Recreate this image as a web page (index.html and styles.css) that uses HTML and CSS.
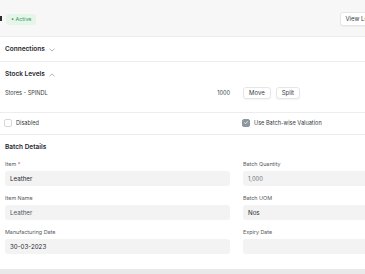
FILE: index.html
```html
<!DOCTYPE html>
<html>
<head>
<meta charset="utf-8">
<link rel="stylesheet" href="styles.css">
</head>
<body>
<div class="page">
  <header class="head">
    <span class="title-end"></span>
    <span class="badge">&bull; Active</span>
    <span class="spacer"></span>
    <button class="btn view">View Ledger</button>
  </header>

  <section class="sec conn">
    <h2 class="sec-title">Connections
      <svg class="chev" viewBox="0 0 8 5" width="6" height="4"><path d="M1 1l3 3 3-3" fill="none" stroke="#8a8f94" stroke-width="0.9" stroke-linecap="round" stroke-linejoin="round"/></svg>
    </h2>
  </section>

  <section class="sec stock">
    <h2 class="sec-title">Stock Levels
      <svg class="chev" viewBox="0 0 8 5" width="6" height="4"><path d="M1 4l3-3 3 3" fill="none" stroke="#8a8f94" stroke-width="0.9" stroke-linecap="round" stroke-linejoin="round"/></svg>
    </h2>
    <div class="cols stock-row">
      <div class="wh"><span>Stores - SPINDL</span><span>1000</span></div>
      <div class="acts"><button class="btn sm">Move</button><button class="btn sm">Split</button></div>
    </div>
  </section>

  <section class="sec checks">
    <div class="cols">
      <label class="chk"><span class="box"></span>Disabled</label>
      <label class="chk"><span class="box on"><svg viewBox="0 0 8 8" width="7" height="7"><path d="M2 4.2l1.4 1.4L6 2.8" fill="none" stroke="#fff" stroke-width="1" stroke-linecap="round" stroke-linejoin="round"/></svg></span>Use Batch-wise Valuation</label>
    </div>
  </section>

  <section class="sec details">
    <h2 class="sec-title">Batch Details</h2>
    <div class="cols">
      <div>
        <div class="field"><div class="lbl">Item <span class="req">*</span></div><div class="inp">Leather</div></div>
        <div class="field"><div class="lbl">Item Name</div><div class="inp ro">Leather</div></div>
        <div class="field"><div class="lbl">Manufacturing Date</div><div class="inp">30-03-2023</div></div>
      </div>
      <div>
        <div class="field"><div class="lbl">Batch Quantity</div><div class="inp ro2">1,000</div></div>
        <div class="field"><div class="lbl">Batch UOM</div><div class="inp">Nos</div></div>
        <div class="field"><div class="lbl">Expiry Date</div><div class="inp"></div></div>
      </div>
    </div>
  </section>
  <div class="foot"></div>
</div>
</body>
</html>
```

FILE: styles.css
```css
html, body {
  margin: 0;
  padding: 0;
  overflow: hidden;
  background: #fff;
}
body {
  font-family: Inter, "Noto Sans", sans-serif;
  color: #1f272e;
  width: 365px;
  height: 274px;
}
.page {
  width: 480px;
}
.head {
  height: 37px;
  background: #f7f7f7;
  border-bottom: 1px solid #ececec;
  display: flex;
  align-items: center;
  box-sizing: border-box;
}
.title-end {
  width: 2px;
  height: 5px;
  background: #2b2f33;
  margin-top: 1px;
}
.badge {
  margin-left: 4px;
  background: #e5f5ea;
  color: #3b9a62;
  font-size: 5.4px;
  height: 11px;
  line-height: 11px;
  padding: 0 5px;
  border-radius: 3px;
  margin-top: 2px;
}
.spacer { width: 304px; }
.btn {
  font-family: inherit;
  background: #fff;
  border: 1px solid #e6e6e6;
  border-radius: 3px;
  color: #383d42;
  padding: 0 4px;
  box-shadow: 0 1px 1px rgba(0,0,0,0.04);
  margin: 0;
  cursor: pointer;
}
.view {
  font-size: 6px;
  height: 14px;
  line-height: 12px;
  padding: 0 4px;
  white-space: nowrap;
  margin-top: 2px;
}
.sec {
  border-bottom: 1px solid #ededed;
  padding: 0 5px;
}
.sec-title {
  margin: 0;
  font-size: 6.5px;
  font-weight: 600;
  line-height: 9px;
  height: 9px;
  display: flex;
  align-items: center;
  gap: 4px;
  color: #1f272e;
}
.chev { display: block; }
.conn { padding-top: 8px; padding-bottom: 7px; }
.stock { padding-top: 8px; padding-bottom: 13px; }
.cols {
  display: grid;
  grid-template-columns: 225px 225px;
  column-gap: 13px;
}
.stock-row {
  margin-top: 8px;
  height: 12px;
  align-items: center;
}
.wh {
  display: flex;
  justify-content: space-between;
  font-size: 5.6px;
  color: #383d42;
}
.acts { display: flex; gap: 5px; }
.btn.sm {
  font-size: 6px;
  height: 12px;
  line-height: 10px;
  padding: 0 5px;
}
.checks { padding-top: 6px; padding-bottom: 8px; }
.chk {
  display: flex;
  align-items: center;
  gap: 4px;
  height: 7px;
  font-size: 5.6px;
  color: #383d42;
}
.box {
  width: 6px;
  height: 6px;
  border: 1px solid #d6d8da;
  border-radius: 2px;
  background: #fff;
  display: flex;
  align-items: center;
  justify-content: center;
  margin-left: -1px;
}
.box.on {
  background: #8f979e;
  border-color: #8f979e;
}
.box svg { display: block; }
.details { padding-top: 8px; padding-bottom: 7px; border-bottom: none; }
.details .cols { margin-top: 8px; }
.field { margin-bottom: 8px; }
.lbl {
  font-size: 5.4px;
  line-height: 8px;
  height: 8px;
  color: #525a61;
  margin-bottom: 3px;
}
.req { color: #e24c4c; }
.inp {
  height: 15px;
  line-height: 15px;
  background: #f3f3f3;
  border-radius: 3px;
  padding: 0 5px;
  font-size: 6.2px;
  color: #1f272e;
}
.inp.ro { color: #4f565c; }
.inp.ro2 { color: #6b7278; font-size: 5.8px; }
.foot {
  height: 10px;
  background: #e9e9e9;
}
```
